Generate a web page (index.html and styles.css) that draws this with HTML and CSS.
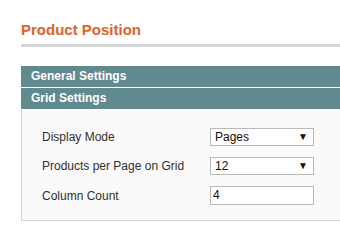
FILE: index.html
```html
<!DOCTYPE html>
<html lang="en">
<head>
    <meta charset="UTF-8">
    <title>Product Position</title>
    <link rel="stylesheet" href="styles.css">
</head>
<body>
    <div class="page">
        <h3 class="page-title">Product Position</h3>
        <div class="title-rule"></div>

        <div class="section">
            <div class="section-head">General Settings</div>
            <div class="section-head">Grid Settings</div>
            <div class="fieldset">
                <div class="field">
                    <label>Display Mode</label>
                    <div class="select"><span>Pages</span><span class="arrow">&#9660;</span></div>
                </div>
                <div class="field">
                    <label>Products per Page on Grid</label>
                    <div class="select"><span>12</span><span class="arrow">&#9660;</span></div>
                </div>
                <div class="field">
                    <label>Column Count</label>
                    <div class="input">4</div>
                </div>
            </div>
        </div>
    </div>
</body>
</html>
```

FILE: styles.css
```css
:root {
    --orange: #e0622a;
    --teal: #618a8f;
    --rule: #d6d6d6;
    --text: #2f2f2f;
}

body {
    margin: 0;
    background: #ffffff;
    font-family: "Liberation Sans", Arial, sans-serif;
    color: var(--text);
}

.page {
    padding: 21px 0 0 21px;
}

.page-title {
    margin: 0;
    font-size: 15px;
    line-height: 18px;
    font-weight: bold;
    color: var(--orange);
}

.title-rule {
    height: 3px;
    margin-top: 5px;
    background: var(--rule);
}

.section {
    margin-top: 19px;
}

.section-head {
    height: 21px;
    line-height: 21px;
    padding-left: 10px;
    background: var(--teal);
    color: #ffffff;
    font-size: 12px;
    font-weight: bold;
    border-bottom: 1px solid #ffffff;
}

.section-head:last-of-type {
    border-bottom: 1px solid #dceef0;
}

/* panel runs on past the right edge of the window */
.fieldset {
    background: #fafafa;
    border-left: 1px solid var(--rule);
    border-bottom: 1px solid var(--rule);
    padding: 18px 0 15px 20px;
    display: flex;
    flex-direction: column;
    gap: 11px;
}

.field {
    display: flex;
    align-items: center;
    font-size: 12px;
}

.field label {
    width: 168px;
}

.select, .input {
    box-sizing: border-box;
    width: 104px;
    height: 18px;
    border: 1px solid #b9b9b9;
    background: #ffffff;
    padding: 0 4px;
    font-size: 12px;
    line-height: 16px;
    color: #111111;
}

.select {
    display: flex;
    justify-content: space-between;
}

.arrow {
    font-size: 10px;
    padding-right: 1px;
}

.input {
    height: 19px;
    padding-left: 2px;
}
```
